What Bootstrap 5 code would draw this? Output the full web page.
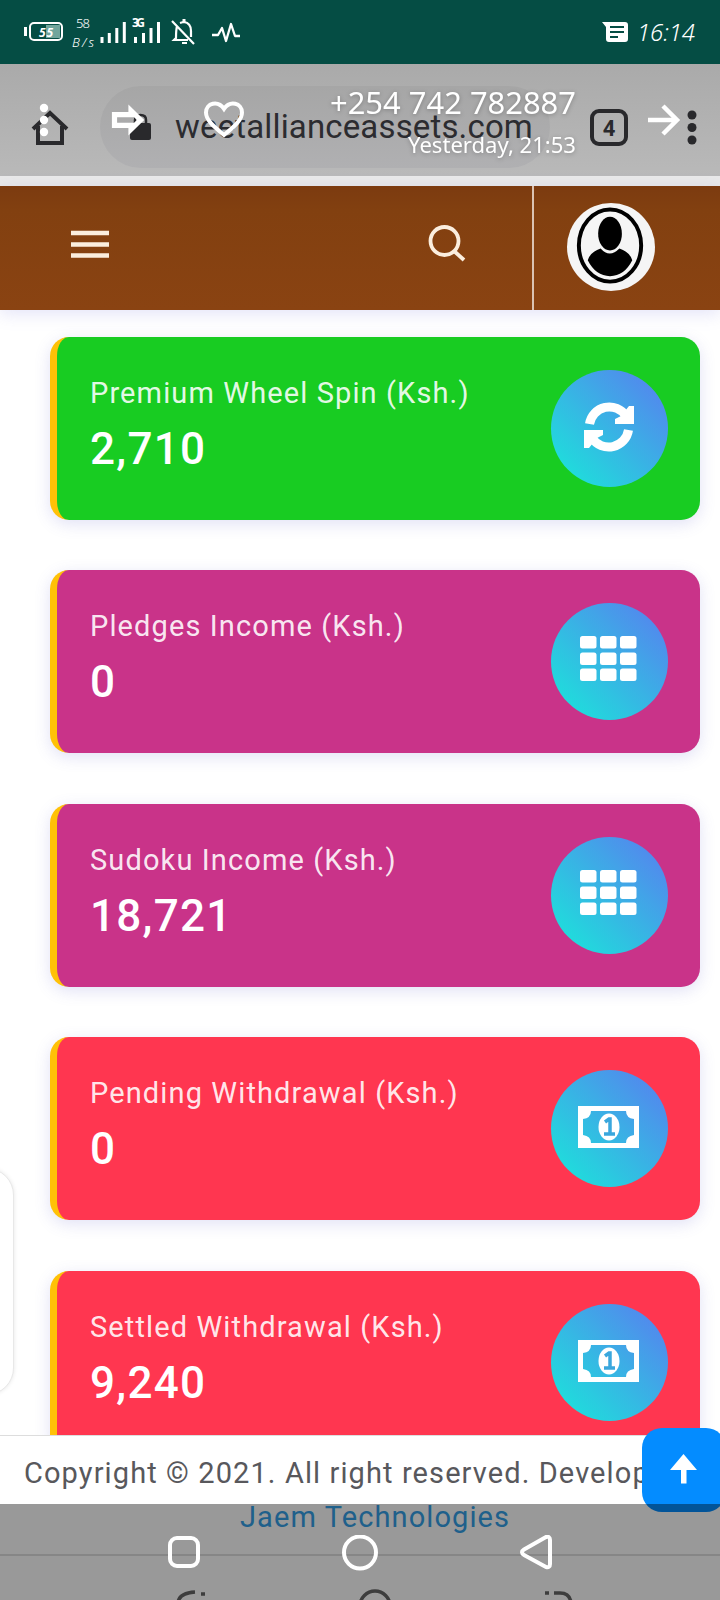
<!DOCTYPE html>
<html lang="en">
<head>
<meta charset="utf-8">
<meta name="viewport" content="width=device-width, initial-scale=1">
<title>Weet Alliance Assets</title>
<link rel="stylesheet" href="https://cdn.jsdelivr.net/npm/bootstrap@5.3.0/dist/css/bootstrap.min.css">
<style>
body{font-family:Roboto,"Liberation Sans",sans-serif;background:#fff}
svg{display:block;flex:none}
.phone{width:720px;height:1600px}
.status-bar{height:64px;background:#054d44;color:#fff;padding:0 24px;font-family:"Noto Sans",sans-serif}
.url-bar{height:112px;background:linear-gradient(#aaa,#b9b9b9);padding-left:31px}
.url-pill{width:450px;height:82px;border-radius:41px;background:linear-gradient(#a6a6a6,#b0b0b2);margin-left:31px;padding-left:30px;color:#2c2c30;margin-top:14px;flex:none}
.url-text{font-size:33px;letter-spacing:.15px;margin-left:24px;line-height:1.3}
.viewer-bar{height:112px;top:64px;color:#fff;font-family:"Noto Sans",sans-serif}
.strip{height:10px;background:#e9e9e9}
.site-nav{height:124px;background:linear-gradient(#7c3b10,#824010 20%,#8a4312);box-shadow:0 4px 16px rgba(120,120,220,.2);padding-left:71px}
.site-nav .divider{width:2px;height:124px;background:#dbc3b2}
.avatar{width:88px;height:88px;background:#f5f5f5;margin-left:33px;margin-top:-2px}
.cards-col{height:1125px;padding:27px 20px 0 50px;overflow:hidden}
.stat-card{height:183px;flex:none;margin-bottom:50.4px;border-left:7px solid #ffc107;border-radius:19px;box-shadow:0 4px 16px rgba(90,90,200,.18);color:#fff;padding:33px 32px 0 33px}
.bg-spin{background:#18cc22}.bg-game{background:#c93389}.bg-draw{background:#ff3650}
.stat-name{font-size:29px;letter-spacing:1.12px;line-height:34px;margin-top:6px;color:rgba(255,255,255,.9);white-space:nowrap}
.stat-value{font-size:44px;font-weight:500;letter-spacing:1.3px;line-height:50px;margin-top:14px}
.round-icon{width:117px;height:117px;background:linear-gradient(45deg,#17ead9,#5a7cf0)}
.site-footer{height:165px;border-top:1px solid #ddd;font-size:29px;color:#58585c;line-height:44px;padding-top:15px;overflow:hidden;white-space:nowrap;letter-spacing:1.1px}
.site-footer .copy{padding-left:24px}
.site-footer .maker{color:#35a0e8;padding-left:240px;font-size:29px}
.bottom-rule{border-top:2px solid #e0e0e0;margin-top:15px}
.top-btn{left:642px;top:1428px;width:84px;height:84px;border-radius:20px;background:#048cff}
.nav-dim{top:1504px;height:96px;background:rgba(0,0,0,.4)}
.nav-dim .keys{padding-top:31px;padding-left:168px}
.side-tab{left:-40px;top:1168px;width:54px;height:227px;border:1px solid #e8e8e8;border-radius:30px;box-shadow:0 0 4px rgba(0,0,0,.1)}
</style>
</head>
<body>
<div class="phone position-relative overflow-hidden">
  <header class="status-bar d-flex align-items-center">
    <svg width="220" height="64" viewBox="24 0 220 64" fill="none" stroke="#fff">
      <path d="M25.500 27v9" stroke-width="3"/><rect x="30" y="23" width="32" height="17" rx="4" stroke-width="2"/><path d="M46 25h14v13H46z" fill="#71a59c" stroke="none"/>
      <g fill="#fff" stroke="none" font-family="Noto Sans"><text x="39" y="37" font-size="12" font-weight="700" font-style="italic" textLength="14">55</text>
      <text x="76" y="28" font-size="13" font-weight="300" textLength="14">58</text><text x="72" y="47" font-size="13" font-style="italic" font-weight="300" textLength="22">B/s</text>
      <text x="132" y="27" font-size="12" font-weight="700" textLength="13">3G</text></g>
      <path d="M102 37v6m7.300-10v10m7.500-15v15m7.500-21v21M135.500 37v6m8-10v10m7.500-15v15m7.500-21v21" stroke-width="3"/>
      <path d="M177 26q-1 4-1 12l-2 2h14M180 23q3-1 4-1q7 1 7 9v6M172 21l22 23M182 43h5" stroke-width="2.200"/><path d="M184 19v3" stroke-width="3"/>
      <path d="M212 35h6l4-7 4 13 5-17 4 12h5" stroke-width="2.300" stroke-linejoin="round"/>
    </svg>
    <svg class="ms-auto" width="94" height="64" viewBox="602 0 94 64"><path d="M602 22h23q3 0 3 3v14q0 3-3 3h-16q-3 0-3-3V27z" fill="#fff"/><path d="M610 27h14m-14 5h14m-14 5h8" stroke="#054d44" stroke-width="2"/><text x="637" y="41" fill="#fff" font-family="Noto Sans" font-style="italic" font-weight="300" font-size="24" textLength="58">16:14</text></svg>
  </header>

  <div class="url-bar d-flex align-items-center">
    <svg width="38" height="38" viewBox="0 0 38 38" fill="none" stroke="#29292c" stroke-width="4" style="margin-top:14px"><path d="M2 21 19 5 36 21M7 18v17h24V18"/></svg>
    <div class="url-pill d-flex align-items-center">
      <svg width="21" height="28" viewBox="0 0 21 28"><rect y="10" width="21" height="17" rx="2" fill="#29292c"/><path d="M5 11V7q0-5 5.500-5T16 7v4" fill="none" stroke="#29292c" stroke-width="2.500"/></svg>
      <span class="url-text">weetallianceassets.com</span>
    </div>
    <svg width="110" height="40" viewBox="588 107 110 40" style="margin-left:38px;margin-top:14px"><rect x="592" y="111" width="34" height="33" rx="7" fill="none" stroke="#29292c" stroke-width="4"/><text x="609" y="136" text-anchor="middle" font-family="Roboto" font-size="22" font-weight="700" fill="#29292c">4</text><g fill="#29292c"><circle cx="692" cy="115" r="4.500"/><circle cx="692" cy="127.500" r="4.500"/><circle cx="692" cy="140" r="4.500"/></g></svg>
  </div>
  <div class="strip"></div>

  <nav class="site-nav d-flex align-items-center position-relative">
    <svg width="38" height="30" viewBox="0 0 38 30" stroke="#fbeede" stroke-width="4.500" style="margin-top:-8px"><path d="M0 4h38M0 15.500h38M0 26.500h38"/></svg>
    <svg width="38" height="38" viewBox="0 0 38 38" fill="none" stroke="#fbeede" stroke-width="3.800" style="margin-left:319px;margin-top:-10px"><circle cx="16.500" cy="17" r="14"/><path d="m26 27 10 9"/></svg>
    <div class="divider" style="margin-left:66px"></div>
    <div class="avatar rounded-circle"><svg width="88" height="88" viewBox="0 0 89 89"><ellipse cx="43.500" cy="43" rx="31.500" ry="36.500" fill="none" stroke="#000" stroke-width="4"/><ellipse cx="43.500" cy="31" rx="12" ry="17"/><path d="M21 58q2-8 13-12 9 10 19 0 11 4 13 12-8 16-22.500 16T21 58z"/></svg></div>
  </nav>

  <main class="cards-col d-flex flex-column">
    <section class="stat-card bg-spin d-flex justify-content-between"><div><div class="stat-name">Premium Wheel Spin (Ksh.)</div><div class="stat-value">2,710</div></div>
      <div class="round-icon rounded-circle"><svg width="117" height="117" viewBox="0 0 117 117"><g transform="translate(33 32)" fill="none" stroke="#fff" stroke-width="9"><path d="M5.500 22A20 20 0 0 1 42 14"/><path d="M44.500 28A20 20 0 0 1 8 36"/><path d="M50 4v18H31v-5l6-3 8-10zM0 46V28h19v5l-6 3-8 10z" fill="#fff" stroke="none"/></g></svg></div></section>
    <section class="stat-card bg-game d-flex justify-content-between"><div><div class="stat-name">Pledges Income (Ksh.)</div><div class="stat-value">0</div></div>
      <div class="round-icon rounded-circle"><svg width="117" height="117" viewBox="0 0 117 117" fill="#fff"><defs><g id="tiles"><rect width="16.500" height="12.500" rx="2.500"/><rect x="20" width="16.500" height="12.500" rx="2.500"/><rect x="40" width="16.500" height="12.500" rx="2.500"/></g></defs><use href="#tiles" x="29" y="33"/><use href="#tiles" x="29" y="49.500"/><use href="#tiles" x="29" y="65.500"/></svg></div></section>
    <section class="stat-card bg-game d-flex justify-content-between"><div><div class="stat-name">Sudoku Income (Ksh.)</div><div class="stat-value">18,721</div></div>
      <div class="round-icon rounded-circle"><svg width="117" height="117" viewBox="0 0 117 117" fill="#fff"><use href="#tiles" x="29" y="33"/><use href="#tiles" x="29" y="49.500"/><use href="#tiles" x="29" y="65.500"/></svg></div></section>
    <section class="stat-card bg-draw d-flex justify-content-between"><div><div class="stat-name">Pending Withdrawal (Ksh.)</div><div class="stat-value">0</div></div>
      <div class="round-icon rounded-circle"><svg width="117" height="117" viewBox="0 0 117 117"><defs><g id="note"><path fill="#fff" fill-rule="evenodd" d="M27 36h61v42H27zM40 41q0 7-8 8v16q8 1 8 8h35q0-7 8-8V49q-8-1-8-8z"/><ellipse cx="58" cy="57" rx="10.500" ry="13.500" fill="#fff"/><path d="m54 52 4-3h1v15m-6 0h11" fill="none" stroke="#3aa7dd" stroke-width="3.500"/></g></defs><use href="#note"/></svg></div></section>
    <section class="stat-card bg-draw d-flex justify-content-between"><div><div class="stat-name">Settled Withdrawal (Ksh.)</div><div class="stat-value">9,240</div></div>
      <div class="round-icon rounded-circle"><svg width="117" height="117" viewBox="0 0 117 117"><use href="#note"/></svg></div></section>
  </main>

  <footer class="site-footer bg-white">
    <div class="copy">Copyright © 2021. All right reserved. Developed by</div>
    <div class="maker">Jaem Technologies</div>
    <div class="bottom-rule"></div>
    <svg width="720" height="50" viewBox="0 1556 720 50" fill="none" stroke="#666" stroke-width="3.500"><path d="M178 1604q0-11 17-12M201 1594h4M545 1593h4M554 1593h6q10 0 11 10"/><circle cx="375" cy="1606" r="15"/></svg>
  </footer>

  <div class="side-tab position-absolute bg-white"></div>
  <div class="top-btn position-absolute"><svg width="84" height="84" viewBox="0 0 84 84"><path d="M41.500 26 55 42h-10.500v13.500h-5.500V42H28z" fill="#fff"/></svg></div>

  <div class="viewer-bar position-absolute start-0 w-100 d-flex">
    <svg width="250" height="112" viewBox="0 64 250 112"><g fill="#fff"><circle cx="44" cy="108" r="4.200"/><circle cx="44" cy="120" r="4.200"/><circle cx="44" cy="132" r="4.200"/></g><path d="M114.500 114.700h16.500v-4l9.500 9.300-9.500 9.300v-4h-16.500z" fill="none" stroke="#fff" stroke-width="5.200"/><path d="M224 135C213 126 206 120 206 112.500C206 103 218 100 224 109C230 100 242 103 242 112.500C242 120 235 126 224 135Z" fill="none" stroke="#fff" stroke-width="4"/></svg>
    <div class="ms-auto text-end" style="padding-top:18px">
      <svg width="260" height="88" viewBox="0 0 260 88" fill="#fff" font-family="Noto Sans" style="filter:drop-shadow(0 1px 2px rgba(0,0,0,.25))"><text x="14" y="32" font-size="31" textLength="246" lengthAdjust="spacingAndGlyphs">+254 742 782887</text><text x="92" y="71" font-size="22.500" textLength="168" lengthAdjust="spacingAndGlyphs">Yesterday, 21:53</text></svg>
    </div>
    <svg width="144" height="112" viewBox="576 64 144 112"><path d="M648 120h29M663 106l14 14-14 14" fill="none" stroke="#fff" stroke-width="4.500"/></svg>
  </div>

  <div class="nav-dim position-absolute start-0 w-100"><div class="keys">
    <svg width="384" height="36" viewBox="168 1535 384 36" fill="none" stroke="#fff" stroke-width="4"><rect x="170" y="1538" width="28" height="28" rx="7"/><circle cx="360" cy="1552.500" r="16"/><path d="M524 1549.500 546 1537q4-1 4 3v24q0 4-4 3L524 1555q-4-3 0-5.500z" stroke-linejoin="round"/></svg>
  </div></div>
</div>
<script src="https://cdn.jsdelivr.net/npm/bootstrap@5.3.0/dist/js/bootstrap.bundle.min.js"></script>
</body>
</html>
